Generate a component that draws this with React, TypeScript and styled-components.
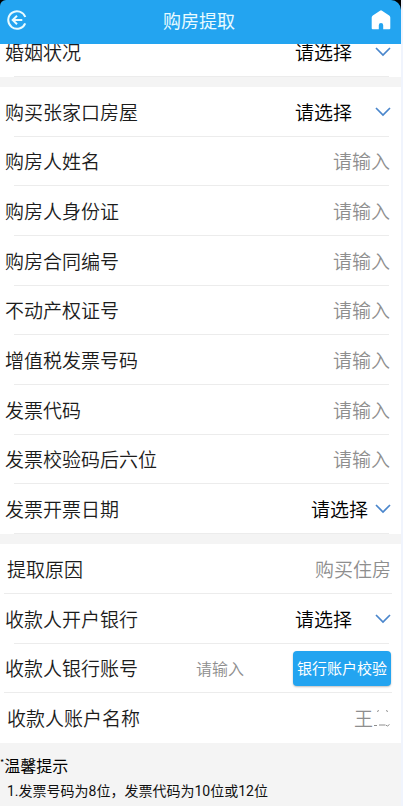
import React, { useId } from 'react';
import styled, { createGlobalStyle } from 'styled-components';

const GlobalStyle = createGlobalStyle`
  *, *::before, *::after { box-sizing: border-box; }
  body {
    margin: 0;
    background: #f0f4fd;
    color: #1c1c1c;
    font-family: "Noto Sans CJK SC", "Noto Sans", sans-serif;
    font-size: 19px;
    font-weight: 350;
  }
  button, input, select { font: inherit; color: inherit; }
`;

const Screen = styled.div`
  display: flex;
  flex-direction: column;
  height: 100vh;
  margin-right: 2px;
  overflow: hidden;
  background: #f4f4f4;
`;

const HeaderFrame = styled.div`
  flex: none;
  position: relative;
  z-index: 1;
  background: #000;
`;

const Header = styled.header`
  display: grid;
  grid-template-columns: 34px 1fr 34px;
  align-items: center;
  justify-items: center;
  height: 44px;
  padding: 0 3px 4px 0;
  background: #23a4f0;
  border-radius: 6px 10px 0 0;
  color: #e9fbff;
`;

const IconButton = styled.button`
  display: flex;
  align-items: center;
  justify-content: center;
  width: 32px;
  height: 32px;
  padding: 0;
  border: 0;
  background: none;
  cursor: pointer;
`;

const Title = styled.h1`
  margin: 0;
  font-size: 18px;
  font-weight: 400;
  line-height: 24px;
`;

const Content = styled.main`
  flex: 1;
  min-height: 0;
`;

const Group = styled.section<{ $minHeight: number; $scrolled?: boolean }>`
  display: grid;
  grid-auto-rows: 1fr;
  min-height: ${(p) => p.$minHeight}px;
  margin-top: ${(p) => (p.$scrolled ? -17 : 10)}px;
  background: #fff;
`;

const Row = styled.div<{ $line: 'inset' | 'wide' | 'none' }>`
  display: flex;
  align-items: center;
  padding: 0 10px 0 5px;
  background: ${(p) =>
    p.$line === 'none'
      ? 'none'
      : `linear-gradient(#ececec, #ececec) ${p.$line === 'inset' ? 'right 12px' : 'right 9px'} bottom / calc(100% - ${
          p.$line === 'inset' ? 26 : 13
        }px) 1px no-repeat`};
`;

const Label = styled.label<{ $indent?: boolean }>`
  flex: 1;
  padding-left: ${(p) => (p.$indent ? 2 : 0)}px;
  line-height: 28px;
  white-space: nowrap;
`;

const Field = styled.input<{ $small?: boolean }>`
  flex: none;
  width: ${(p) => (p.$small ? 97 : 160)}px;
  padding: 0;
  margin-right: ${(p) => (p.$small ? 0 : 1)}px;
  border: 0;
  outline: 0;
  background: none;
  font-size: ${(p) => (p.$small ? 16 : 19)}px;
  line-height: 28px;
  text-align: ${(p) => (p.$small ? 'left' : 'right')};
  &::placeholder { color: #8e8e8e; opacity: 1; }
`;

const Value = styled.output`
  display: flex;
  align-items: center;
  line-height: 28px;
  color: #8e8e8e;
`;

const Picker = styled.span<{ $tight?: boolean }>`
  display: flex;
  align-items: center;
  gap: ${(p) => (p.$tight ? 6 : 22)}px;
`;

const Select = styled.select`
  appearance: none;
  padding: 0;
  border: 0;
  outline: 0;
  background: none;
  line-height: 28px;
  color: #000;
`;

const VerifyButton = styled.button`
  flex: none;
  height: 35px;
  padding: 0 4px;
  border: 0;
  border-radius: 4px;
  background: #23a4f0;
  box-shadow: 0 1px 2px rgba(0, 0, 0, 0.25);
  color: #fff;
  font-size: 15px;
  font-weight: 400;
  line-height: 20px;
  cursor: pointer;
`;

const Tips = styled.footer`
  padding: 9px 7px 0;
  color: #111;
  font-weight: 400;
`;

const TipsTitle = styled.h2`
  display: flex;
  margin: 0 0 0 -7px;
  font-size: 16px;
  font-weight: 400;
  line-height: 26px;
  color: #000;
`;

const Asterisk = styled.span`
  font-size: 9px;
  line-height: 22px;
`;

const TipsList = styled.p`
  margin: 0;
  font-family: Roboto, "Noto Sans CJK SC", sans-serif;
  font-size: 14px;
  line-height: 26px;
`;

const Chevron = () => (
  <svg width="16" height="10" viewBox="0 0 16 10" fill="none" stroke="#4a86cc" strokeWidth="1.7" aria-hidden="true">
    <path d="M1 1l7 7 7-7" />
  </svg>
);

const BackIcon = () => (
  <svg width="20" height="20" viewBox="0 0 20 20" fill="none" stroke="currentColor" strokeWidth="2" aria-hidden="true">
    <path d="M18.300 7A8.800 8.800 0 1 0 18.200 13.300" />
    <path d="M15.300 10H6M10 5.700L5.700 10l4.300 4.300" />
  </svg>
);

const HomeIcon = () => (
  <svg width="20" height="20" viewBox="0 0 20 20" fill="#fff" aria-hidden="true">
    <path d="M9 0.700Q10 0 11 0.700L18.200 5.400Q19.300 6.200 19.300 7.500V18.200Q19.300 19.200 18.300 19.200H12.200V15.200a2.200 2.200 0 0 0-4.400 0V19.200H1.700Q0.700 19.200 0.700 18.200V7.500Q0.700 6.200 1.800 5.400Z" />
  </svg>
);

const MaskedName = () => (
  <svg width="18" height="18" viewBox="0 0 18 18" fill="none" stroke="#8e8e8e" strokeWidth="1" aria-hidden="true">
    <path d="M4 2.500l2-1M13 1.500l2 1M1 16.500h3M6 16h6M12.500 16l2 1 2-1.500" />
  </svg>
);

function SelectRow({ label, tight }: { label: string; tight?: boolean }) {
  const id = useId();
  return (
    <Row $line="inset">
      <Label htmlFor={id}>{label}</Label>
      <Picker $tight={tight}>
        <Select id={id}>
          <option>请选择</option>
        </Select>
        <Chevron />
      </Picker>
    </Row>
  );
}

function InputRow({ label }: { label: string }) {
  const id = useId();
  return (
    <Row $line="inset">
      <Label htmlFor={id}>{label}</Label>
      <Field id={id} placeholder="请输入" />
    </Row>
  );
}

const invoiceFields = [
  '购房人姓名',
  '购房人身份证',
  '购房合同编号',
  '不动产权证号',
  '增值税发票号码',
  '发票代码',
  '发票校验码后六位',
];

export default function App() {
  return (
    <>
      <GlobalStyle />
      <Screen>
        <HeaderFrame>
          <Header>
            <IconButton aria-label="返回">
              <BackIcon />
            </IconButton>
            <Title>购房提取</Title>
            <IconButton aria-label="首页">
              <HomeIcon />
            </IconButton>
          </Header>
        </HeaderFrame>
        <Content>
          <Group $minHeight={50} $scrolled>
            <SelectRow label="婚姻状况" />
          </Group>
          <Group $minHeight={447}>
            <SelectRow label="购买张家口房屋" />
            {invoiceFields.map((label) => (
              <InputRow key={label} label={label} />
            ))}
            <SelectRow label="发票开票日期" tight />
          </Group>
          <Group $minHeight={199}>
            <Row $line="wide">
              <Label htmlFor="reason" $indent>提取原因</Label>
              <Value id="reason">购买住房</Value>
            </Row>
            <SelectRow label="收款人开户银行" />
            <Row $line="wide">
              <Label htmlFor="account">收款人银行账号</Label>
              <Field id="account" placeholder="请输入" $small />
              <VerifyButton>银行账户校验</VerifyButton>
            </Row>
            <Row $line="none">
              <Label htmlFor="holder" $indent>收款人账户名称</Label>
              <Value id="holder">
                王
                <MaskedName />
              </Value>
            </Row>
          </Group>
          <Tips>
            <TipsTitle>
              <Asterisk>*</Asterisk>温馨提示
            </TipsTitle>
            <TipsList>1.发票号码为8位，发票代码为10位或12位</TipsList>
          </Tips>
        </Content>
      </Screen>
    </>
  );
}
